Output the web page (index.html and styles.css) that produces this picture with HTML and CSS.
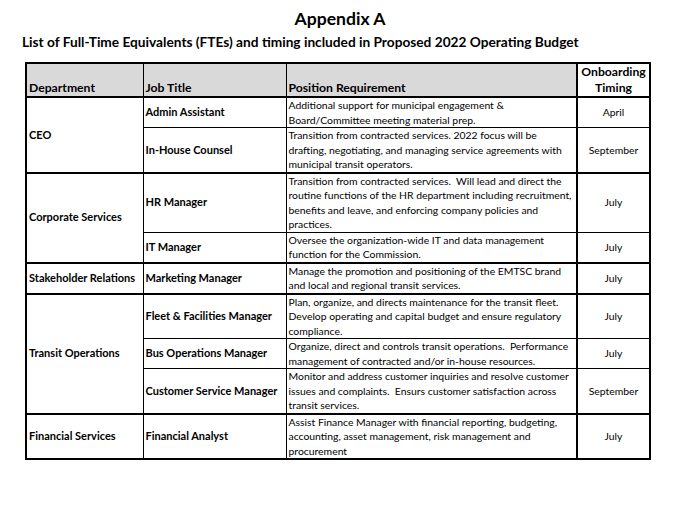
FILE: index.html
```html
<!DOCTYPE html>
<html lang="en">
<head>
    <meta charset="UTF-8">
    <meta name="viewport" content="width=device-width, initial-scale=1.0">
    <title>Appendix A</title>
    <link rel="stylesheet" href="styles.css">
</head>
<body>
    <div class="page">
        <h1>Appendix A</h1>
        <h2>List of Full-Time Equivalents (FTEs) and timing included in Proposed 2022 Operating Budget</h2>

        <table class="fte">
            <colgroup>
                <col class="c-dept">
                <col class="c-job">
                <col class="c-req">
                <col class="c-time">
            </colgroup>
            <thead>
                <tr>
                    <th class="gray">Department</th>
                    <th class="gray">Job Title</th>
                    <th class="gray">Position Requirement</th>
                    <th class="timing">Onboarding<br>Timing</th>
                </tr>
            </thead>
            <tbody>
                <!-- CEO -->
                <tr class="group">
                    <td class="dept" rowspan="2">CEO</td>
                    <td class="job">Admin Assistant</td>
                    <td class="req">Additional support for municipal engagement &amp;<br>Board/Committee meeting material prep.</td>
                    <td class="time">April</td>
                </tr>
                <tr>
                    <td class="job">In-House Counsel</td>
                    <td class="req">Transition from contracted services. 2022 focus will be<br>drafting, negotiating, and managing service agreements with<br>municipal transit operators.</td>
                    <td class="time">September</td>
                </tr>

                <!-- Corporate Services -->
                <tr class="group">
                    <td class="dept" rowspan="2">Corporate Services</td>
                    <td class="job">HR Manager</td>
                    <td class="req">Transition from contracted services.&nbsp; Will lead and direct the<br>routine functions of the HR department including recruitment,<br>benefits and leave, and enforcing company policies and<br>practices.</td>
                    <td class="time">July</td>
                </tr>
                <tr>
                    <td class="job">IT Manager</td>
                    <td class="req">Oversee the organization-wide IT and data management<br>function for the Commission.</td>
                    <td class="time">July</td>
                </tr>

                <!-- Stakeholder Relations -->
                <tr class="group">
                    <td class="dept">Stakeholder Relations</td>
                    <td class="job">Marketing Manager</td>
                    <td class="req">Manage the promotion and positioning of the EMTSC brand<br>and local and regional transit services.</td>
                    <td class="time">July</td>
                </tr>

                <!-- Transit Operations -->
                <tr class="group">
                    <td class="dept" rowspan="3">Transit Operations</td>
                    <td class="job">Fleet &amp; Facilities Manager</td>
                    <td class="req">Plan, organize, and directs maintenance for the transit fleet.<br>Develop operating and capital budget and ensure regulatory<br>compliance.</td>
                    <td class="time">July</td>
                </tr>
                <tr>
                    <td class="job">Bus Operations Manager</td>
                    <td class="req">Organize, direct and controls transit operations.&nbsp; Performance<br>management of contracted and/or in-house resources.</td>
                    <td class="time">July</td>
                </tr>
                <tr>
                    <td class="job">Customer Service Manager</td>
                    <td class="req">Monitor and address customer inquiries and resolve customer<br>issues and complaints.&nbsp; Ensurs customer satisfaction across<br>transit services.</td>
                    <td class="time">September</td>
                </tr>

                <!-- Financial Services -->
                <tr class="group">
                    <td class="dept">Financial Services</td>
                    <td class="job">Financial Analyst</td>
                    <td class="req">Assist Finance Manager with financial reporting, budgeting,<br>accounting, asset management, risk management and<br>procurement</td>
                    <td class="time">July</td>
                </tr>
            </tbody>
        </table>
    </div>
</body>
</html>
```

FILE: styles.css
```css
body {
    margin: 0;
    background: #fff;
    color: #000;
    font-family: Lato, "Open Sans", sans-serif;
}
.page {
    width: 684px;
    padding-top: 9px;
}
h1 {
    margin: 0 0 0 -4px;
    font-size: 17.6px;
    line-height: 20px;
    text-align: center;
    font-weight: bold;
}
h2 {
    margin: 4px 0 0 22px;
    font-size: 13.7px;
    line-height: 18px;
    font-weight: bold;
    white-space: nowrap;
}
.fte {
    margin: 11px 0 0 25px;
    border-collapse: collapse;
    table-layout: fixed;
    width: 624px;
    font-size: 10.4px;
    line-height: 14.5px;
    border: 2px solid #000;
}
.c-dept { width: 117px; }
.c-job { width: 143px; }
.c-req { width: 291px; }
.c-time { width: 73px; }
.fte th, .fte td {
    border: 1px solid #000;
    padding: 0 2px;
    white-space: nowrap;
    overflow: hidden;
}
.fte th {
    height: 32px;
    text-align: left;
    vertical-align: bottom;
    font-weight: bold;
    font-size: 12.2px;
    line-height: 16px;
    border-bottom: 2px solid #000;
}
.fte th.gray {
    background: #d9d9d9;
}
.fte th.timing {
    text-align: center;
    background: #fff;
}
.fte th:nth-child(3), .fte td.req {
    border-right: 2px solid #000;
}
.fte tr.group td {
    border-top: 2px solid #000;
}
.fte td.dept {
    font-weight: bold;
    font-size: 11px;
    vertical-align: middle;
}
.fte td.job {
    font-weight: bold;
    font-size: 11px;
    vertical-align: middle;
}
.fte td.req {
    vertical-align: top;
}
.fte td.time {
    text-align: center;
    vertical-align: middle;
}
```
